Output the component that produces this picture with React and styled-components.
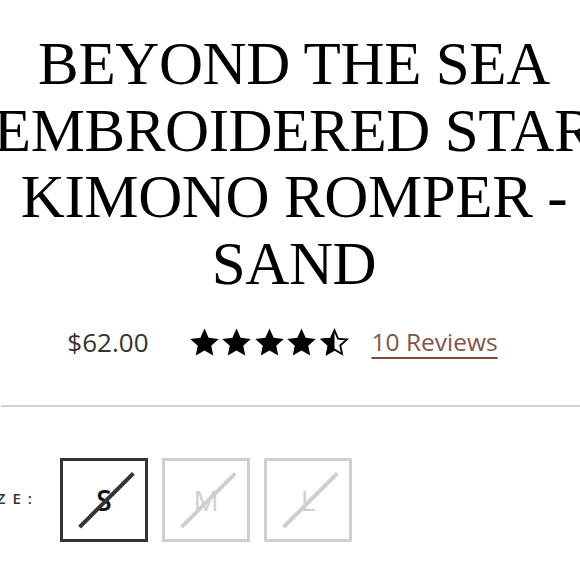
import React from "react";
import styled, { createGlobalStyle } from "styled-components";

const Global = createGlobalStyle`
  html, body { margin: 0; padding: 0; background: #fff; }
  body { overflow: hidden; width: 580px; height: 580px; }
  #root { width: 580px; height: 580px; overflow: hidden; }
`;

const Column = styled.div`
  width: 648px;
  margin-left: -30px;
  display: flex;
  flex-direction: column;
`;

const Title = styled.h1`
  margin: 31px 0 0;
  font-family: "Liberation Serif", "Times New Roman", serif;
  font-weight: 400;
  font-size: 61px;
  line-height: 66.6px;
  letter-spacing: -0.4px;
  color: #000;
  text-align: center;
  text-transform: uppercase;
`;

const PriceRow = styled.div`
  margin-top: 27px;
  height: 36px;
  display: flex;
  align-items: center;
  justify-content: center;
  padding-right: 23px;
`;

const Price = styled.span`
  font-family: "Open Sans", sans-serif;
  font-size: 26px;
  line-height: 36px;
  color: #333;
  margin-right: 40px;
`;

const Stars = styled.div`
  display: flex;
  gap: 1.5px;
  margin-right: 22px;
`;

const Reviews = styled.a`
  font-family: "Open Sans", sans-serif;
  font-size: 24.5px;
  line-height: 36px;
  color: #7f5544;
  text-decoration: underline;
  text-decoration-thickness: 2px;
  text-underline-offset: 6px;
  text-decoration-color: #7b4a38;
`;

const Divider = styled.hr`
  margin: 45px 0 0 31px;
  border: 0;
  height: 2px;
  background: #d2d2d2;
`;

const SizeRow = styled.div`
  margin-top: 51px;
  display: flex;
  align-items: center;
  gap: 14px;
`;

const SizeLabel = styled.span`
  width: 76px;
  font-family: "Open Sans", sans-serif;
  font-weight: 600;
  font-size: 15px;
  letter-spacing: 7px;
  color: #333;
  white-space: nowrap;
  padding-bottom: 4px;
`;

const SizeBox = styled.button`
  position: relative;
  width: 88px;
  height: 84px;
  box-sizing: border-box;
  padding: 0;
  background: #fff;
  border: 3px solid ${(p) => (p.$active ? "#333" : "#cfcfcf")};
  font-family: "Open Sans", sans-serif;
  font-weight: ${(p) => (p.$active ? 600 : 400)};
  font-size: 28px;
  color: ${(p) => (p.$active ? "#111" : "#cfcfcf")};
  display: flex;
  align-items: center;
  justify-content: center;
  &::after {
    content: "";
    position: absolute;
    left: 50%;
    top: 50%;
    width: 76px;
    height: 3.5px;
    background: ${(p) => (p.$active ? "#333" : "#cfcfcf")};
    transform: translate(-47%, -50%) rotate(-45deg);
  }
`;

const STAR =
  "M15 0.5L19 9.5L28.8 10.5L21.5 17.1L23.5 26.7L15 21.8L6.5 26.7L8.5 17.1L1.2 10.5L11 9.5Z";

function Star({ half }) {
  return (
    <svg width="31" height="29" viewBox="0 0 30 28">
      {half ? (
        <>
          <defs>
            <clipPath id="lefthalf">
              <rect x="0" y="0" width="15" height="28" />
            </clipPath>
          </defs>
          <path d="M15 2.3L18.4 10.2L27 11.1L20.6 16.8L22.3 25.1L15 20.9L7.7 25.1L9.4 16.8L3 11.1L11.6 10.2Z" fill="none" stroke="#000" strokeWidth="1.8" strokeLinejoin="miter" />
          <path d={STAR} fill="#000" clipPath="url(#lefthalf)" />
        </>
      ) : (
        <path d={STAR} fill="#000" />
      )}
    </svg>
  );
}

export default function App() {
  return (
    <>
      <Global />
      <Column>
        <Title>Beyond The Sea Embroidered Star Kimono Romper - Sand</Title>
        <PriceRow>
          <Price>$62.00</Price>
          <Stars>
            <Star />
            <Star />
            <Star />
            <Star />
            <Star half />
          </Stars>
          <Reviews href="#">10 Reviews</Reviews>
        </PriceRow>
        <Divider />
        <SizeRow>
          <SizeLabel>SIZE:</SizeLabel>
          <SizeBox $active>S</SizeBox>
          <SizeBox>M</SizeBox>
          <SizeBox>L</SizeBox>
        </SizeRow>
      </Column>
    </>
  );
}
